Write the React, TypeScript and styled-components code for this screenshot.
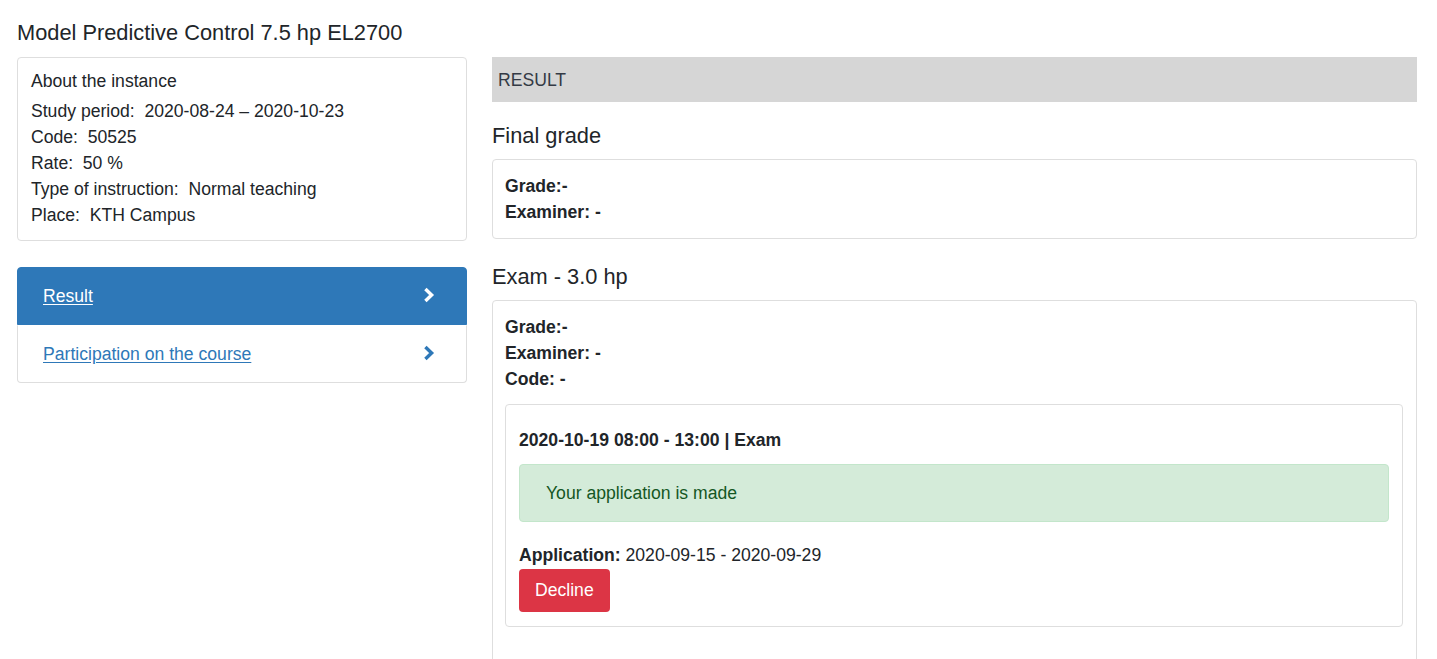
import React from "react";
import styled, { createGlobalStyle } from "styled-components";

const GlobalStyle = createGlobalStyle`
  html, body {
    margin: 0;
    padding: 0;
    background: #ffffff;
  }
  body {
    font-family: "Liberation Sans", Arial, sans-serif;
    font-size: 17.6px;
    line-height: 26px;
    color: #212529;
  }
  * { box-sizing: border-box; }
`;

const Page = styled.div`
  padding: 20px 20px 0 17px;
`;

const PageTitle = styled.h1`
  margin: 0 0 11px;
  font-size: 21.8px;
  line-height: 26px;
  font-weight: normal;
  color: #212529;
`;

const Columns = styled.div`
  display: grid;
  grid-template-columns: 450px 1fr;
  column-gap: 25px;
  align-items: start;
`;

const LeftColumn = styled.div`
  display: flex;
  flex-direction: column;
  gap: 26px;
`;

const RightColumn = styled.div`
  display: flex;
  flex-direction: column;
`;

const InfoCard = styled.section`
  border: 1px solid #dedede;
  border-radius: 4px;
  padding: 10px 13px 12px;
`;

const InfoHeading = styled.h2`
  margin: 0 0 4px;
  font-size: 17.6px;
  line-height: 26px;
  font-weight: normal;
`;

const InfoRow = styled.div`
  white-space: pre;
`;

const NavList = styled.nav`
  display: flex;
  flex-direction: column;
`;

const NavItem = styled.a<{ $active?: boolean; $first?: boolean; $last?: boolean }>`
  display: flex;
  align-items: center;
  justify-content: space-between;
  height: 58px;
  padding: 0 31px 0 25px;
  border: 1px solid ${(p) => (p.$active ? "#2e78b8" : "#dedede")};
  border-top-color: ${(p) => (p.$active ? "#2e78b8" : "#ffffff")};
  border-radius: ${(p) =>
    p.$first ? "4px 4px 0 0" : p.$last ? "0 0 4px 4px" : "0"};
  background: ${(p) => (p.$active ? "#2e78b8" : "#ffffff")};
  color: ${(p) => (p.$active ? "#ffffff" : "#2e78b8")};
  text-decoration: underline;
  text-underline-offset: 2px;
  font-size: 17.6px;
  line-height: 26px;
  cursor: pointer;
`;

const Chevron = styled.svg`
  width: 12px;
  height: 16px;
  display: block;
  margin-top: -2px;
`;

const ResultBar = styled.div`
  height: 45px;
  display: flex;
  align-items: center;
  padding: 0 6px;
  background: #d6d6d6;
  color: #343a45;
  font-size: 17.6px;
`;

const SectionHeading = styled.h2<{ $top: number }>`
  margin: ${(p) => p.$top}px 0 10px;
  font-size: 21.8px;
  line-height: 26px;
  font-weight: normal;
  color: #212529;
`;

const Card = styled.section<{ $bottom?: number }>`
  border: 1px solid #dedede;
  border-radius: 4px;
  padding: 13px 13px ${(p) => p.$bottom ?? 13}px 12px;
`;

const BoldRow = styled.div`
  font-weight: bold;
`;

const InnerCard = styled.div`
  margin-top: 12px;
  border: 1px solid #dedede;
  border-radius: 4px;
  padding: 13px 13px 14px;
`;

const ExamTitle = styled.div`
  padding-top: 9px;
  font-weight: bold;
`;

const Alert = styled.div`
  margin-top: 11px;
  padding: 15px 26px;
  background: #d4ebd9;
  border: 1px solid #c3e6cb;
  border-radius: 4px;
  color: #155724;
`;

const ApplicationRow = styled.div`
  margin-top: 20px;
`;

const Strong = styled.strong`
  font-weight: bold;
`;

const DeclineButton = styled.button`
  display: block;
  margin-top: 1px;
  padding: 9px 16px;
  border: none;
  border-radius: 4px;
  background: #dc3545;
  color: #ffffff;
  font-family: "Liberation Sans", Arial, sans-serif;
  font-size: 17.6px;
  line-height: 25px;
  cursor: pointer;
`;

const ChevronIcon = () => (
  <Chevron viewBox="0 0 12 16" aria-hidden="true">
    <polyline
      points="2.4,2 8.6,8 2.4,14"
      fill="none"
      stroke="currentColor"
      strokeWidth="3.4"
    />
  </Chevron>
);

const info: [string, string][] = [
  ["Study period", "2020-08-24 \u2013 2020-10-23"],
  ["Code", "50525"],
  ["Rate", "50 %"],
  ["Type of instruction", "Normal teaching"],
  ["Place", "KTH Campus"],
];

export default function App() {
  return (
    <>
      <GlobalStyle />
      <Page>
        <PageTitle>Model Predictive Control 7.5 hp EL2700</PageTitle>
        <Columns>
          <LeftColumn>
            <InfoCard>
              <InfoHeading>About the instance</InfoHeading>
              {info.map(([label, value]) => (
                <InfoRow key={label}>{`${label}:  ${value}`}</InfoRow>
              ))}
            </InfoCard>
            <NavList>
              <NavItem $active $first>
                <span>Result</span>
                <ChevronIcon />
              </NavItem>
              <NavItem $last>
                <span>Participation on the course</span>
                <ChevronIcon />
              </NavItem>
            </NavList>
          </LeftColumn>
          <RightColumn>
            <ResultBar>RESULT</ResultBar>
            <SectionHeading $top={21}>Final grade</SectionHeading>
            <Card>
              <BoldRow>Grade:-</BoldRow>
              <BoldRow>Examiner: -</BoldRow>
            </Card>
            <SectionHeading $top={25}>Exam - 3.0 hp</SectionHeading>
            <Card $bottom={60}>
              <BoldRow>Grade:-</BoldRow>
              <BoldRow>Examiner: -</BoldRow>
              <BoldRow>Code: -</BoldRow>
              <InnerCard>
                <ExamTitle>2020-10-19 08:00 - 13:00 | Exam</ExamTitle>
                <Alert>Your application is made</Alert>
                <ApplicationRow>
                  <Strong>Application:</Strong> 2020-09-15 - 2020-09-29
                </ApplicationRow>
                <DeclineButton>Decline</DeclineButton>
              </InnerCard>
            </Card>
          </RightColumn>
        </Columns>
      </Page>
    </>
  );
}
